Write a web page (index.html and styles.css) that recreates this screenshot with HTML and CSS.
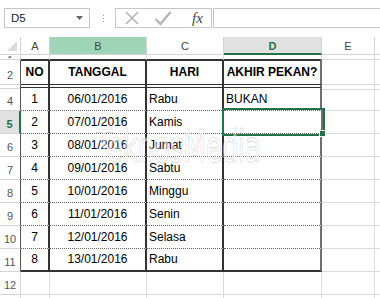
FILE: index.html
```html
<!DOCTYPE html>
<html>
<head>
<meta charset="utf-8">
<link rel="stylesheet" href="styles.css">
</head>
<body>
<div class="bar">
  <div class="namebox"><span class="nb-text">D5</span><svg class="nb-arrow" width="7" height="4" viewBox="0 0 7 4"><path d="M0 0H7L3.5 4Z" fill="#666"/></svg></div>
  <div class="dots"><i></i><i></i><i></i></div>
  <div class="fxbtns">
    <svg class="ico" width="16" height="16" viewBox="0 0 16 16"><path d="M2 2L14 14M14 2L2 14" stroke="#b4b4b4" stroke-width="1.6" fill="none"/></svg>
    <svg class="ico" width="18" height="16" viewBox="0 0 18 16"><path d="M1.5 9L6.5 14L16.5 2" stroke="#b4b4b4" stroke-width="2.4" fill="none"/></svg>
    <span class="fx">fx</span>
  </div>
  <div class="formula"></div>
</div>
<div class="sheet">
  <div class="c ch corner"><svg width="10" height="10" viewBox="0 0 10 10"><path d="M10 0V10H0Z" fill="#dcdcdc"/></svg></div>
  <div class="c ch">A</div>
  <div class="c ch selcol">B</div>
  <div class="c ch">C</div>
  <div class="c ch actcol">D</div>
  <div class="c ch">E</div>
  <div class="c ch"></div>

  <div class="c rh r1h"><span class="clip">1</span></div>
  <div class="c above"></div><div class="c above"></div><div class="c above"></div><div class="c above"></div><div class="c"></div><div class="c"></div>

  <div class="c rh edge">2</div>
  <div class="c h">NO</div><div class="c h">TANGGAL</div><div class="c h">HARI</div><div class="c h hl">AKHIR PEKAN?</div><div class="c"></div><div class="c"></div>

  <div class="c rh edge"></div>
  <div class="c gap"></div><div class="c gap"></div><div class="c gap"></div><div class="c gap gl"></div><div class="c"></div><div class="c"></div>

  <div class="c rh edge">4</div>
  <div class="c d ctr">1</div><div class="c d ctr">06/01/2016</div><div class="c d">Rabu</div><div class="c d dl">BUKAN</div><div class="c"></div><div class="c"></div>

  <div class="c rh edge actrow">5</div>
  <div class="c d ctr">2</div><div class="c d ctr">07/01/2016</div><div class="c d">Kamis</div><div class="c d dl sel"><span class="handle"></span></div><div class="c"></div><div class="c"></div>

  <div class="c rh edge">6</div>
  <div class="c d ctr">3</div><div class="c d ctr">08/01/2016</div><div class="c d">Jumat</div><div class="c d dl"></div><div class="c"></div><div class="c"></div>

  <div class="c rh edge">7</div>
  <div class="c d ctr">4</div><div class="c d ctr">09/01/2016</div><div class="c d">Sabtu</div><div class="c d dl"></div><div class="c"></div><div class="c"></div>

  <div class="c rh edge">8</div>
  <div class="c d ctr">5</div><div class="c d ctr">10/01/2016</div><div class="c d">Minggu</div><div class="c d dl"></div><div class="c"></div><div class="c"></div>

  <div class="c rh edge">9</div>
  <div class="c d ctr">6</div><div class="c d ctr">11/01/2016</div><div class="c d">Senin</div><div class="c d dl"></div><div class="c"></div><div class="c"></div>

  <div class="c rh edge">10</div>
  <div class="c d ctr">7</div><div class="c d ctr">12/01/2016</div><div class="c d">Selasa</div><div class="c d dl"></div><div class="c"></div><div class="c"></div>

  <div class="c rh edge">11</div>
  <div class="c d last ctr">8</div><div class="c d last ctr">13/01/2016</div><div class="c d last">Rabu</div><div class="c d dl last"></div><div class="c"></div><div class="c"></div>

  <div class="c rh">12</div>
  <div class="c"></div><div class="c"></div><div class="c"></div><div class="c"></div><div class="c"></div><div class="c"></div>

  <div class="c rh">13</div>
  <div class="c"></div><div class="c"></div><div class="c"></div><div class="c"></div><div class="c"></div><div class="c"></div>

  <div class="watermark">TeknosMedia</div>
</div>
</body>
</html>
```

FILE: styles.css
```css
html, body {
  margin: 0;
  padding: 0;
  background: #fff;
  overflow: hidden;
}
body {
  width: 380px;
  height: 298px;
  font-family: "Liberation Sans", Arial, sans-serif;
  color: #000;
}
.bar {
  display: flex;
  align-items: flex-start;
  height: 37px;
  padding-top: 8px;
  box-sizing: border-box;
  white-space: nowrap;
}
.namebox {
  margin-left: 4px;
  width: 86px;
  height: 20px;
  box-sizing: border-box;
  border: 1px solid #c6c6c6;
  display: flex;
  align-items: center;
  justify-content: space-between;
  padding: 0 6px 0 6px;
}
.nb-text {
  font-size: 11.5px;
  color: #222;
}
.dots {
  width: 3px;
  margin-left: 13px;
  height: 20px;
  display: flex;
  flex-direction: column;
  justify-content: center;
  gap: 2px;
}
.dots i {
  display: block;
  width: 1px;
  height: 1px;
  background: #999;
}
.fxbtns {
  margin-left: 9px;
  width: 97px;
  height: 20px;
  box-sizing: border-box;
  border: 1px solid #c6c6c6;
  display: flex;
  align-items: center;
  padding-left: 8px;
  gap: 14px;
}
.fx {
  font-family: "Liberation Serif", "Times New Roman", serif;
  font-style: italic;
  font-size: 15px;
  color: #444;
  margin-left: 6px;
}
.formula {
  margin-left: 1px;
  flex: 1;
  height: 20px;
  box-sizing: border-box;
  border: 1px solid #c6c6c6;
  border-right: none;
}
.sheet {
  position: relative;
  display: grid;
  grid-template-columns: 21px 29px 97px 77px 98px 53px 30px;
  grid-template-rows: 18px 5px 25px 3px repeat(10, 23px);
  width: 405px;
}
.c {
  box-sizing: border-box;
  border-right: 1px solid #dadada;
  border-bottom: 1px solid #dadada;
  font-size: 12px;
  white-space: nowrap;
  overflow: hidden;
  display: flex;
  align-items: flex-end;
  padding: 0 2px 4px 2px;
}
.ctr { justify-content: center; }
.ch {
  color: #444;
  font-size: 11px;
  justify-content: center;
  align-items: center;
  padding: 0;
  border-color: #d4d4d4;
}
.corner {
  justify-content: flex-end;
  align-items: flex-end;
  padding: 0 3px 3px 0;
}
.selcol { background: #9fd5b7; }
.actcol {
  background: #e1e1e1;
  color: #217346;
  font-weight: bold;
  border-bottom: 2px solid #217346;
  padding-top: 2px;
}
.rh {
  color: #555;
  font-size: 11px;
  justify-content: center;
  padding: 0 0 3px 0;
  border-color: #d4d4d4;
}
.r1h {
  align-items: flex-start;
  padding: 0;
}
.clip {
  display: block;
  height: 3px;
  overflow: hidden;
  font-size: 11px;
  line-height: 11px;
}
.edge { border-right: 1px solid #555; }
.above { border-bottom: 2px solid #333; }
.h {
  font-weight: bold;
  justify-content: center;
  border-right: 2px solid #333;
  border-bottom: 1px solid #333;
  padding-bottom: 5px;
}
.gap {
  border-right: 2px solid #333;
  border-bottom: 1px solid #333;
  padding: 0;
}
.d {
  border-right: 2px solid #333;
  border-bottom: 1px dotted #666;
}
.d.last { border-bottom: 2px solid #333; }
.hl, .gl, .dl { border-right: 2px solid #6f6f6f; }
.actrow {
  background: #e1e1e1;
  color: #217346;
  font-weight: bold;
  border-right: 2px solid #217346;
}
.sel {
  position: relative;
  overflow: visible;
  outline: 2px solid #217346;
  margin: -1px -1px 0 0;
  z-index: 2;
}
.handle {
  position: absolute;
  right: -5px;
  bottom: -4px;
  width: 5px;
  height: 5px;
  background: #217346;
  border: 1px solid #fff;
}
.watermark {
  position: absolute;
  left: 96px;
  top: 84px;
  font-family: "DejaVu Sans Condensed", "Liberation Sans", sans-serif;
  font-size: 44px;
  transform: scaleX(0.68);
  transform-origin: left top;
  color: rgba(255,255,255,0.5);
  -webkit-text-stroke: 0.7px rgba(150,150,150,0.45);
  letter-spacing: -1px;
  pointer-events: none;
  z-index: 3;
}
```
